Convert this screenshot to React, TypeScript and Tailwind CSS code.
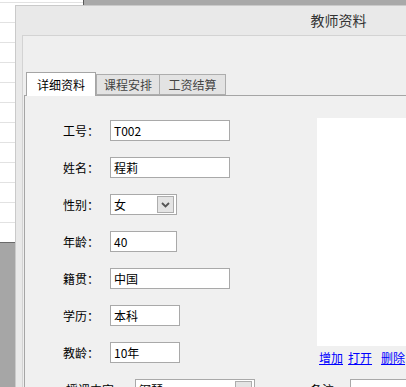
import { ReactNode } from "react";

const font = { fontFamily: '"Noto Sans CJK SC", "Liberation Sans", sans-serif' };

function Chevron() {
  return (
    <svg width="9" height="6" viewBox="0 0 9 6">
      <path d="M1 1 L4.5 4.5 L8 1" stroke="#555" strokeWidth="1.8" fill="none" />
    </svg>
  );
}

function TextBox({ value, width }: { value?: string; width: string }) {
  return (
    <div className={`${width} h-[21px] bg-white border border-[#a9a9a9] pl-[3px] flex items-center text-[12px] text-black`}>
      {value}
    </div>
  );
}

function Combo({ value, width }: { value: string; width: string }) {
  return (
    <div className={`${width} h-[21px] bg-white border border-[#a9a9a9] pl-[3px] pr-[2px] flex items-center justify-between text-[12px] text-black`}>
      <span>{value}</span>
      <div className="w-[17px] h-[17px] bg-[#e4e4e4] border border-[#adadad] flex items-center justify-center">
        <Chevron />
      </div>
    </div>
  );
}

function Row({ label, children }: { label: string; children: ReactNode }) {
  return (
    <div className="flex items-center h-[21px]">
      <div className="w-[47px] text-[12px] text-black leading-none">{label}</div>
      {children}
    </div>
  );
}

export default function App() {
  return (
    <div className="relative w-[406px] h-[387px] overflow-hidden bg-white" style={font}>
      {/* desktop behind the window */}
      <div className="flex h-full">
        <div className="w-[83px] flex flex-col">
          <div className="h-[2px]" />
          {Array.from({ length: 12 }).map((_, i) => (
            <div key={i} className="h-[20px] border-t border-[#e2e2e2]" />
          ))}
          <div className="flex-1 border-t border-[#6a6a6a] bg-[#a6a6a6]" />
        </div>
        <div className="flex-1 border-l border-[#5a5a5a] bg-[#a9a9a9]" />
      </div>

      {/* window */}
      <div className="absolute left-[15px] top-[5px] w-[646px] h-[420px] border-l border-t border-[#cacaca] bg-[#e9e9e9]">
        <div className="h-[29px] flex items-center justify-center text-[14px] text-[#333]">教师资料</div>
        <div className="ml-[6px] h-full border-l border-t border-[#d3d3d3] bg-[#efefef] pt-[35px]">
          <div className="ml-[1px]">
            <div className="flex items-end pl-[2px] h-[24px]">
              <div className="relative z-10 w-[70px] h-[24px] -mb-[1px] bg-white border-l border-t border-r border-[#a5a5a5] flex items-center justify-center text-[12px] text-black">
                详细资料
              </div>
              <div className="w-[64px] h-[21px] bg-[#e3e3e3] border border-[#adadad] flex items-center justify-center text-[12px] text-[#444]">
                课程安排
              </div>
              <div className="w-[66px] h-[21px] bg-[#e3e3e3] border border-l-0 border-[#adadad] flex items-center justify-center text-[12px] text-[#444]">
                工资结算
              </div>
            </div>
            <div className="border-l border-t border-[#a5a5a5] bg-[#f0f0f0] h-[400px] pt-[24px] pl-[38px]">
              <div className="flex">
                <div className="w-[254px] flex flex-col gap-[16px]">
                  <Row label="工号："><TextBox value="T002" width="w-[120px]" /></Row>
                  <Row label="姓名："><TextBox value="程莉" width="w-[120px]" /></Row>
                  <Row label="性别："><Combo value="女" width="w-[67px]" /></Row>
                  <Row label="年龄："><TextBox value="40" width="w-[67px]" /></Row>
                  <Row label="籍贯："><TextBox value="中国" width="w-[120px]" /></Row>
                  <Row label="学历："><TextBox value="本科" width="w-[70px]" /></Row>
                  <Row label="教龄："><TextBox value="10年" width="w-[70px]" /></Row>
                </div>
                <div className="-mt-[2px] flex flex-col">
                  <div className="w-[200px] h-[228px] bg-white" />
                  <div className="mt-[5px] pl-[2px] flex text-[12px] leading-[14px] text-[#0000ff] underline">
                    <span>增加</span>
                    <span className="ml-[5px]">打开</span>
                    <span className="ml-[9px]">删除</span>
                  </div>
                </div>
              </div>
              <div className="mt-[14px] flex items-center h-[21px]">
                <div className="pl-[3px] w-[72px] text-[12px] text-black leading-none">授课内容：</div>
                <Combo value="钢琴" width="w-[120px]" />
                <div className="ml-[55px] w-[40px] text-[12px] text-black leading-none">备注：</div>
                <TextBox width="w-[150px]" />
              </div>
            </div>
          </div>
        </div>
      </div>
    </div>
  );
}
